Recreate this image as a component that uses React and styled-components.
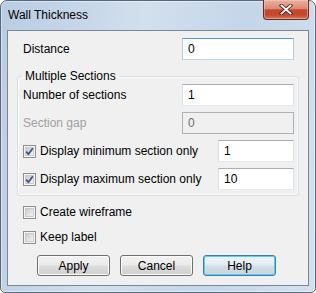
import React from 'react';
import styled, { createGlobalStyle, css } from 'styled-components';

const GlobalStyle = createGlobalStyle`
  html, body {
    margin: 0;
    padding: 0;
    background: #ffffff;
  }
  body {
    font-family: "Liberation Sans", Arial, sans-serif;
    font-size: 12px;
    color: #000;
  }
`;

const Window = styled.div`
  box-sizing: border-box;
  width: 316px;
  height: 293px;
  display: flex;
  flex-direction: column;
  padding: 0 6px 6px;
  border: 1px solid #56687a;
  border-radius: 7px 7px 5px 5px;
  background: linear-gradient(100deg, #b8cce2 0%, #d2dfed 40%, #c5d6e9 68%, #d3e0ee 100%);
  box-shadow: inset 0 0 0 1px rgba(255, 255, 255, 0.45);
`;

const TitleBar = styled.div`
  height: 29px;
  display: flex;
  justify-content: space-between;
  align-items: flex-start;
  flex-shrink: 0;
`;

const Title = styled.div`
  margin-top: 6px;
  padding-left: 1px;
  line-height: 16px;
  font-size: 12px;
  color: #000;
`;

const CloseButton = styled.div`
  box-sizing: border-box;
  width: 46px;
  height: 20px;
  margin-top: -1px;
  border: 1px solid #6a2a1d;
  border-top: none;
  border-radius: 0 0 4px 4px;
  background: linear-gradient(180deg, #eab1a2 0%, #dc8a75 45%, #c5472f 52%, #c4472d 78%, #d8785a 100%);
  box-shadow: inset 0 0 0 1px rgba(255, 210, 195, 0.45);
  display: flex;
  align-items: center;
  justify-content: center;
`;

const Client = styled.div`
  flex: 1;
  display: flex;
  flex-direction: column;
  background: #f0f0f0;
  border: 1px solid #76879a;
`;

const FieldRow = styled.div`
  height: 22px;
  display: flex;
  align-items: center;
  justify-content: space-between;
  ${(p) => p.$outer && css`
    margin-top: 7px;
    padding: 0 14px 0 15px;
  `}
`;

const Label = styled.span`
  line-height: 16px;
  color: ${(p) => (p.$disabled ? '#a0a0a0' : '#000')};
  white-space: nowrap;
`;

const TextBox = styled.input`
  box-sizing: border-box;
  width: ${(p) => p.$w}px;
  height: 22px;
  margin: 0;
  padding: 0 5px;
  font-family: "Liberation Sans", Arial, sans-serif;
  font-size: 12px;
  color: #000;
  background: #fff;
  outline: none;
  border: 1px solid;
  border-color: #abadb3 #e2e3ea #e3e9ef #dbdfe6;
  ${(p) => p.$focused && css`
    border-color: #5a98cc #a9cbe6 #b7d6ec #a9cbe6;
  `}
  &:disabled {
    background: #f0f0f0;
    border-color: #adb2b5;
    color: #6d6d6d;
  }
`;

const Group = styled.fieldset`
  margin: 8px 9px 0 9px;
  padding: 0 4px 5px 5px;
  min-width: 0;
  border: 1px solid #d5dfe5;
  border-radius: 3px;
  box-shadow: inset 0 0 0 1px #fbfcfc;
  display: flex;
  flex-direction: column;
  gap: 6px;
`;

const Legend = styled.legend`
  margin-left: -1px;
  padding: 0 3px;
  line-height: 16px;
  font-size: 12px;
  color: #000;
`;

const CheckRow = styled.label`
  display: flex;
  align-items: center;
  gap: 4px;
  ${(p) => p.$outer && css`
    height: 16px;
    padding-left: 15px;
    margin-top: ${p.$top}px;
  `}
`;

const ButtonRow = styled.div`
  margin-top: 10px;
  padding-right: 3px;
  display: flex;
  justify-content: center;
  gap: 10px;
`;

const Button = styled.button`
  box-sizing: border-box;
  width: 73px;
  height: 21px;
  margin: 0;
  padding: 0;
  font-family: "Liberation Sans", Arial, sans-serif;
  font-size: 12px;
  color: #000;
  border: 1px solid #707070;
  border-radius: 3px;
  background: linear-gradient(180deg, #f2f2f2 0%, #ebebeb 48%, #dddddd 52%, #cfcfcf 100%);
  box-shadow: inset 0 0 0 1px #fbfbfb;
  ${(p) => p.$default && css`
    border-color: #3c7fb1;
    background: linear-gradient(180deg, #edf4f9 0%, #e3ecf2 48%, #d4dfe7 52%, #c7d4de 100%);
    box-shadow: inset 0 0 0 1px #58cdf7;
  `}
`;

const CheckBox = ({ checked }) => (
  <svg width="13" height="13" viewBox="0 0 13 13">
    <defs>
      <linearGradient id={checked ? 'cbOn' : 'cbOff'} x1="0" y1="0" x2="1" y2="1">
        <stop offset="0" stopColor="#c4c7cb" />
        <stop offset="1" stopColor="#f7f7f7" />
      </linearGradient>
    </defs>
    <rect x="0.5" y="0.5" width="12" height="12" fill="#f5f5f5" stroke="#8e8f8f" />
    <rect x="2.5" y="2.5" width="8" height="8" fill={`url(#${checked ? 'cbOn' : 'cbOff'})`} stroke="#c9cbce" />
    {checked && (
      <path d="M3.2 6.6 L5.4 9.2 L9.8 3.2" fill="none" stroke="#3f5387" strokeWidth="1.8" strokeLinejoin="round" />
    )}
  </svg>
);

const CloseGlyph = () => (
  <svg width="14" height="11" viewBox="0 0 14 11">
    <path d="M2.5 1.5 L11.5 9.5 M11.5 1.5 L2.5 9.5" stroke="#5a1d12" strokeWidth="3.6" strokeLinecap="square" />
    <path d="M2.5 1.5 L11.5 9.5 M11.5 1.5 L2.5 9.5" stroke="#ffffff" strokeWidth="1.9" strokeLinecap="square" />
  </svg>
);

export default function App() {
  return (
    <>
      <GlobalStyle />
      <Window>
        <TitleBar>
          <Title>Wall Thickness</Title>
          <CloseButton>
            <CloseGlyph />
          </CloseButton>
        </TitleBar>
        <Client>
          <FieldRow $outer>
            <Label>Distance</Label>
            <TextBox $w={112} $focused defaultValue="0" />
          </FieldRow>

          <Group>
            <Legend>Multiple Sections</Legend>
            <FieldRow>
              <Label>Number of sections</Label>
              <TextBox $w={112} defaultValue="1" />
            </FieldRow>
            <FieldRow>
              <Label $disabled>Section gap</Label>
              <TextBox $w={112} disabled defaultValue="0" />
            </FieldRow>
            <FieldRow>
              <CheckRow>
                <CheckBox checked />
                <Label>Display minimum section only</Label>
              </CheckRow>
              <TextBox $w={76} defaultValue="1" />
            </FieldRow>
            <FieldRow>
              <CheckRow>
                <CheckBox checked />
                <Label>Display maximum section only</Label>
              </CheckRow>
              <TextBox $w={76} defaultValue="10" />
            </FieldRow>
          </Group>

          <CheckRow $outer $top={8}>
            <CheckBox />
            <Label>Create wireframe</Label>
          </CheckRow>
          <CheckRow $outer $top={9}>
            <CheckBox />
            <Label>Keep label</Label>
          </CheckRow>

          <ButtonRow>
            <Button>Apply</Button>
            <Button>Cancel</Button>
            <Button $default>Help</Button>
          </ButtonRow>
        </Client>
      </Window>
    </>
  );
}
